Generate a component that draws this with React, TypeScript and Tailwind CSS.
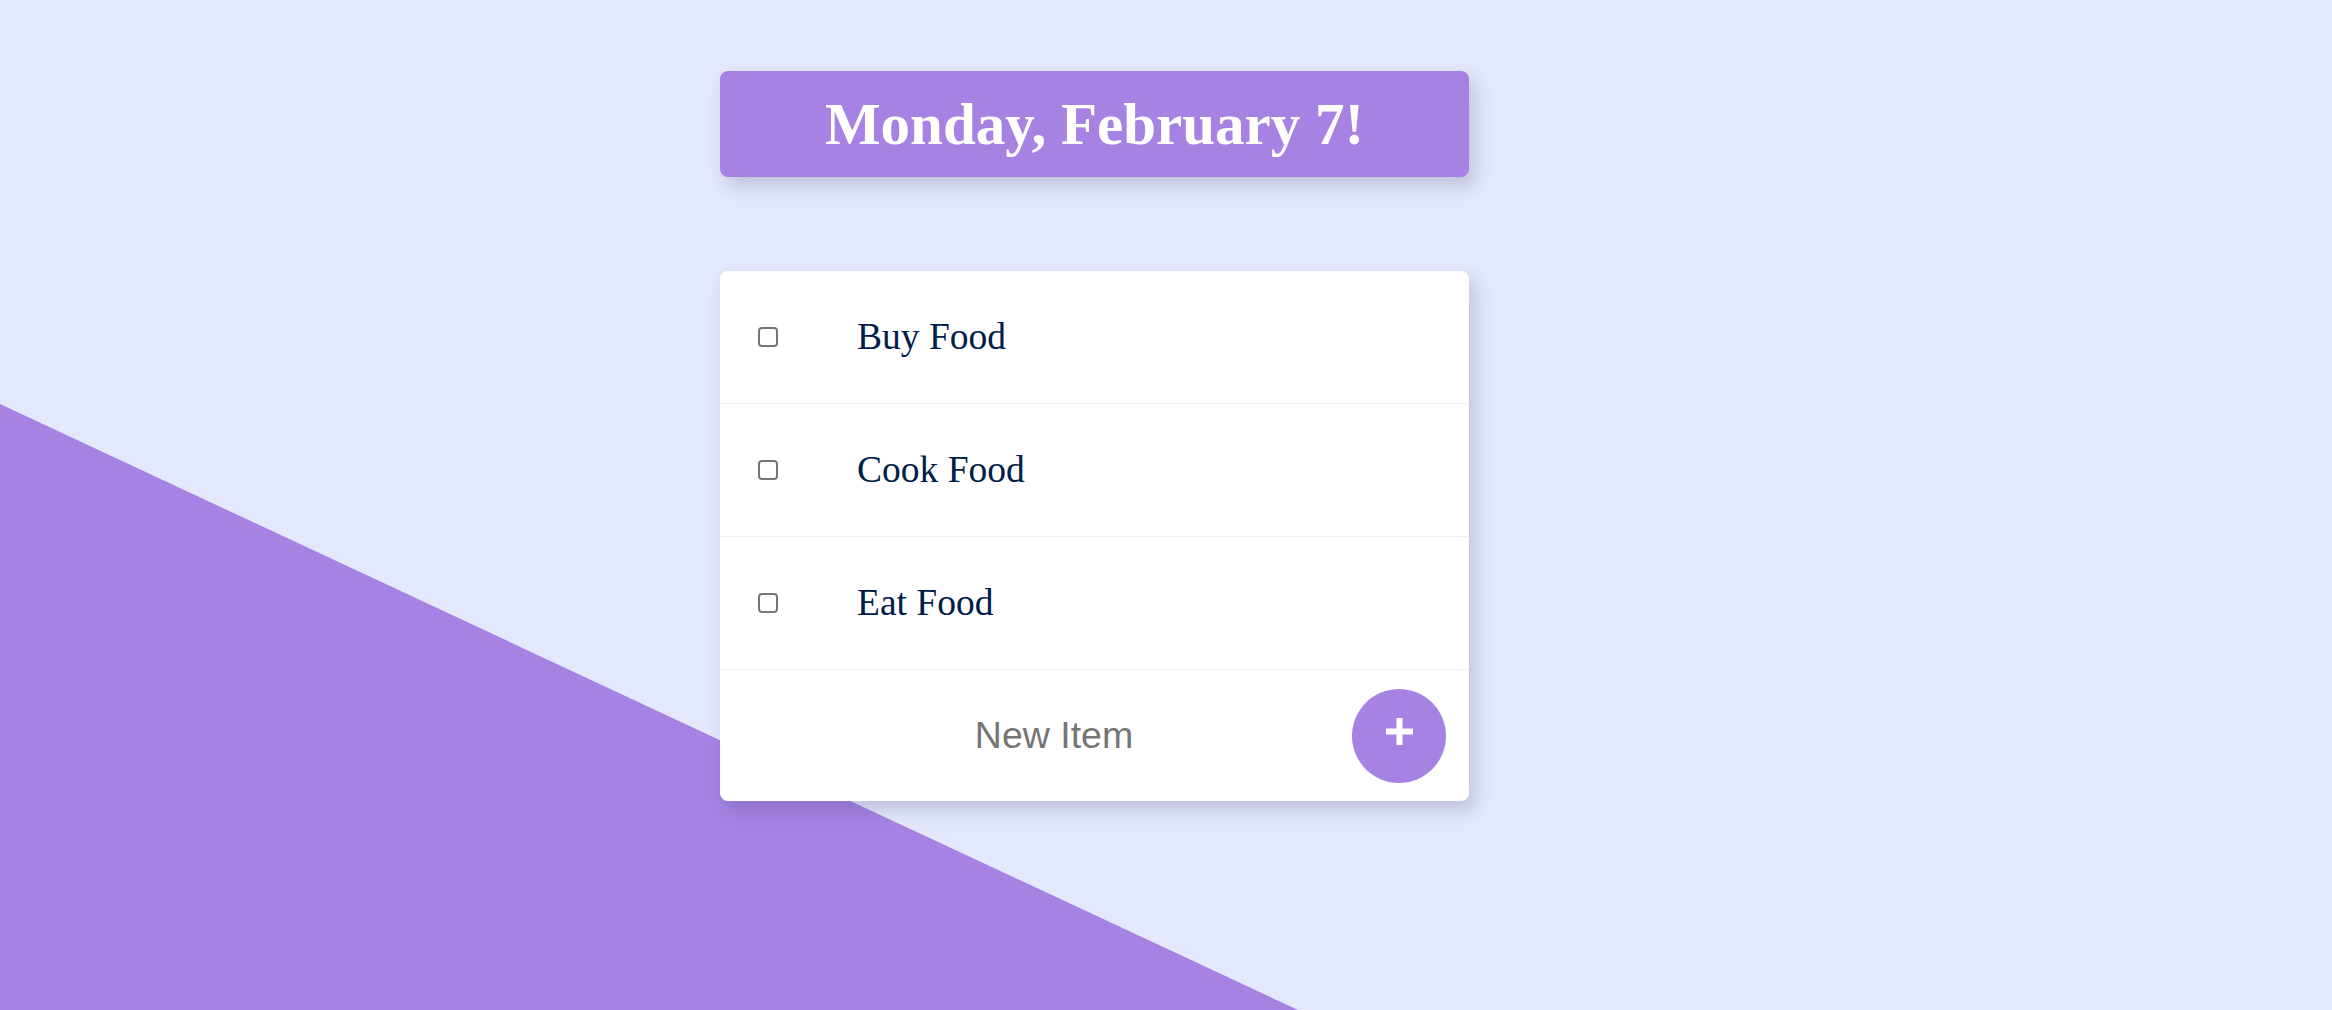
const items = ['Buy Food', 'Cook Food', 'Eat Food'];

export default function App() {
  return (
    <div className="relative min-h-[1010px] w-full overflow-hidden bg-[#e3e8fc]">
      {/* Diagonal backdrop */}
      <svg
        className="absolute inset-0 h-[1010px] w-[2332px]"
        viewBox="0 0 2332 1010"
        preserveAspectRatio="none"
      >
        <polygon points="0,404 1298,1010 0,1010" fill="#a683e3" />
      </svg>

      <div className="relative ml-[720px] w-[749px] pt-[71px]">
        {/* Heading */}
        <div className="flex h-[106px] items-center justify-center rounded-[8px] bg-[#a683e3] shadow-[6px_9px_18px_rgba(60,60,110,0.22)]">
          <h1 className="font-['Liberation_Serif',serif] text-[59px] font-bold leading-none text-white">
            Monday, February 7!
          </h1>
        </div>

        {/* List */}
        <div className="mt-[94px] overflow-hidden rounded-[8px] bg-white shadow-[6px_9px_18px_rgba(60,60,110,0.22)]">
          {items.map((item) => (
            <div
              key={item}
              className="flex h-[133px] items-center border-b border-[#f0f0f0] pl-[38px]"
            >
              <input
                type="checkbox"
                className="h-[20px] w-[20px] appearance-none rounded-[4px] border-2 border-[#767676] bg-white"
              />
              <p className="ml-[79px] font-['Liberation_Serif',serif] text-[37.5px] leading-none text-[#00204a]">
                {item}
              </p>
            </div>
          ))}

          {/* New item */}
          <div className="flex h-[131px] items-center pl-[39px] pr-[23px]">
            <input
              type="text"
              placeholder="New Item"
              className="w-[590px] bg-transparent text-center font-['Liberation_Sans',sans-serif] text-[37.5px] text-[#757575] outline-none placeholder:text-[#757575]"
            />
            <button className="ml-auto flex h-[94px] w-[94px] items-center justify-center rounded-full bg-[#a683e3]">
              <svg width="27" height="27" viewBox="0 0 27 27" className="-mt-[8px]">
                <rect x="10.5" y="0" width="6" height="27" fill="white" />
                <rect x="0" y="10.5" width="27" height="6" fill="white" />
              </svg>
            </button>
          </div>
        </div>
      </div>
    </div>
  );
}
